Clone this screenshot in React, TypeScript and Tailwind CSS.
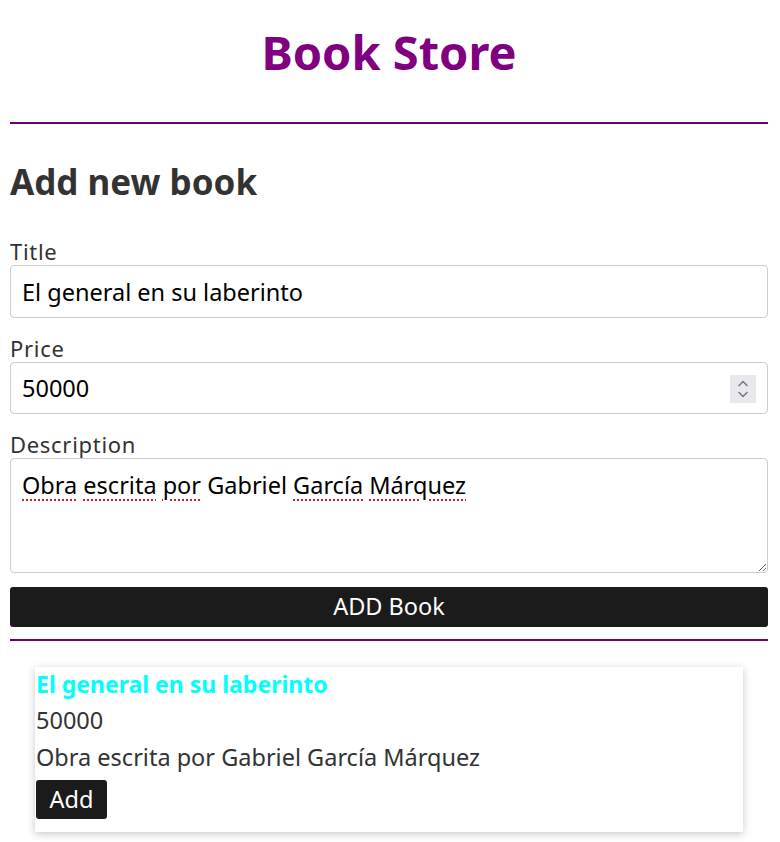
import { useState } from 'react';

type Book = { title: string; price: string; description: string };

const labelCls = 'block text-[22px] leading-[26px] tracking-[0.7px] text-[#333]';
const fieldCls =
  'block w-full rounded-[4px] border border-[#ccc] px-[11px] text-[23.5px] text-black outline-none';
const spellCls = 'underline decoration-dotted decoration-[#e01b1b] decoration-[1.5px] underline-offset-[5px]';

export default function App() {
  const [title, setTitle] = useState('El general en su laberinto');
  const [price, setPrice] = useState('50000');
  const [description, setDescription] = useState('Obra escrita por Gabriel García Márquez');
  const [books, setBooks] = useState<Book[]>([
    { title: 'El general en su laberinto', price: '50000', description: 'Obra escrita por Gabriel García Márquez' },
  ]);

  const addBook = () => {
    setBooks([...books, { title, price, description }]);
  };

  return (
    <div className="min-h-screen bg-white pl-[10px] pr-[12px] font-['Noto_Sans',sans-serif] text-[#333]">
      {/* Header */}
      <h1 className="pt-[22px] pb-[40px] text-center text-[47px] font-bold leading-[60px] text-[#800080]">
        Book Store
      </h1>
      <hr className="border-0 border-t-2 border-[#6e006e]" />

      {/* Form */}
      <h2 className="mt-[38px] mb-[36px] text-[35px] font-bold leading-[40px] text-[#333]">Add new book</h2>

      <label className={labelCls}>Title</label>
      <input
        value={title}
        onChange={(e) => setTitle(e.target.value)}
        className={`mt-[1px] mb-[17px] h-[53px] ${fieldCls}`}
      />

      <label className={labelCls}>Price</label>
      <div className="relative mt-[1px] mb-[17px]">
        <input
          type="number"
          value={price}
          onChange={(e) => setPrice(e.target.value)}
          className={`h-[52px] [appearance:textfield] [&::-webkit-inner-spin-button]:appearance-none [&::-webkit-outer-spin-button]:appearance-none ${fieldCls}`}
        />
        <div className="pointer-events-none absolute right-[12px] top-[13px] flex h-[28px] w-[26px] items-center justify-center bg-[#e9e9ed]">
          <svg width="12" height="22" viewBox="0 0 12 22" fill="none" stroke="#7a7a85" strokeWidth="1.6" strokeLinecap="round" strokeLinejoin="round">
            <path d="M2 7.5 L6 3.5 L10 7.5" />
            <path d="M2 14.5 L6 18.5 L10 14.5" />
          </svg>
        </div>
      </div>

      <label className={labelCls}>Description</label>
      <div className="relative mt-[1px] mb-[14px]">
        <textarea
          value={description}
          onChange={(e) => setDescription(e.target.value)}
          spellCheck={false}
          className={`h-[115px] pt-[10px] leading-[32px] ${fieldCls}`}
        />
        {/* spelling markers */}
        <div className="pointer-events-none absolute left-[12px] top-[11px] text-[23.5px] leading-[32px] text-transparent">
          <span className={spellCls}>Obra</span> <span className={spellCls}>escrita</span>{' '}
          <span className={spellCls}>por</span> Gabriel <span className={spellCls}>García</span>{' '}
          <span className={spellCls}>Márquez</span>
        </div>
      </div>

      <button
        onClick={addBook}
        className="block h-[40px] w-full rounded-[3px] bg-[#1b1b1b] text-[23.5px] text-white"
      >
        ADD Book
      </button>
      <hr className="mt-[12px] border-0 border-t-2 border-[#6e006e]" />

      {/* Book list */}
      <div className="mt-[26px] space-y-4">
        {books.map((book, i) => (
          <div key={i} className="mx-[25px] bg-white pb-[13px] pl-[1px] shadow-[0_2px_8px_rgba(0,0,0,0.22)]">
            <p className="text-[23px] font-bold leading-[34px] text-[#00ffff]">{book.title}</p>
            <p className="pt-[1px] text-[23.5px] leading-[37px] text-[#333]">{book.price}</p>
            <p className="text-[23.5px] leading-[37px] text-[#333]">{book.description}</p>
            <button className="mt-[4px] h-[39px] rounded-[3px] bg-[#1b1b1b] px-[13.5px] text-[23.5px] text-white">
              Add
            </button>
          </div>
        ))}
      </div>
    </div>
  );
}
